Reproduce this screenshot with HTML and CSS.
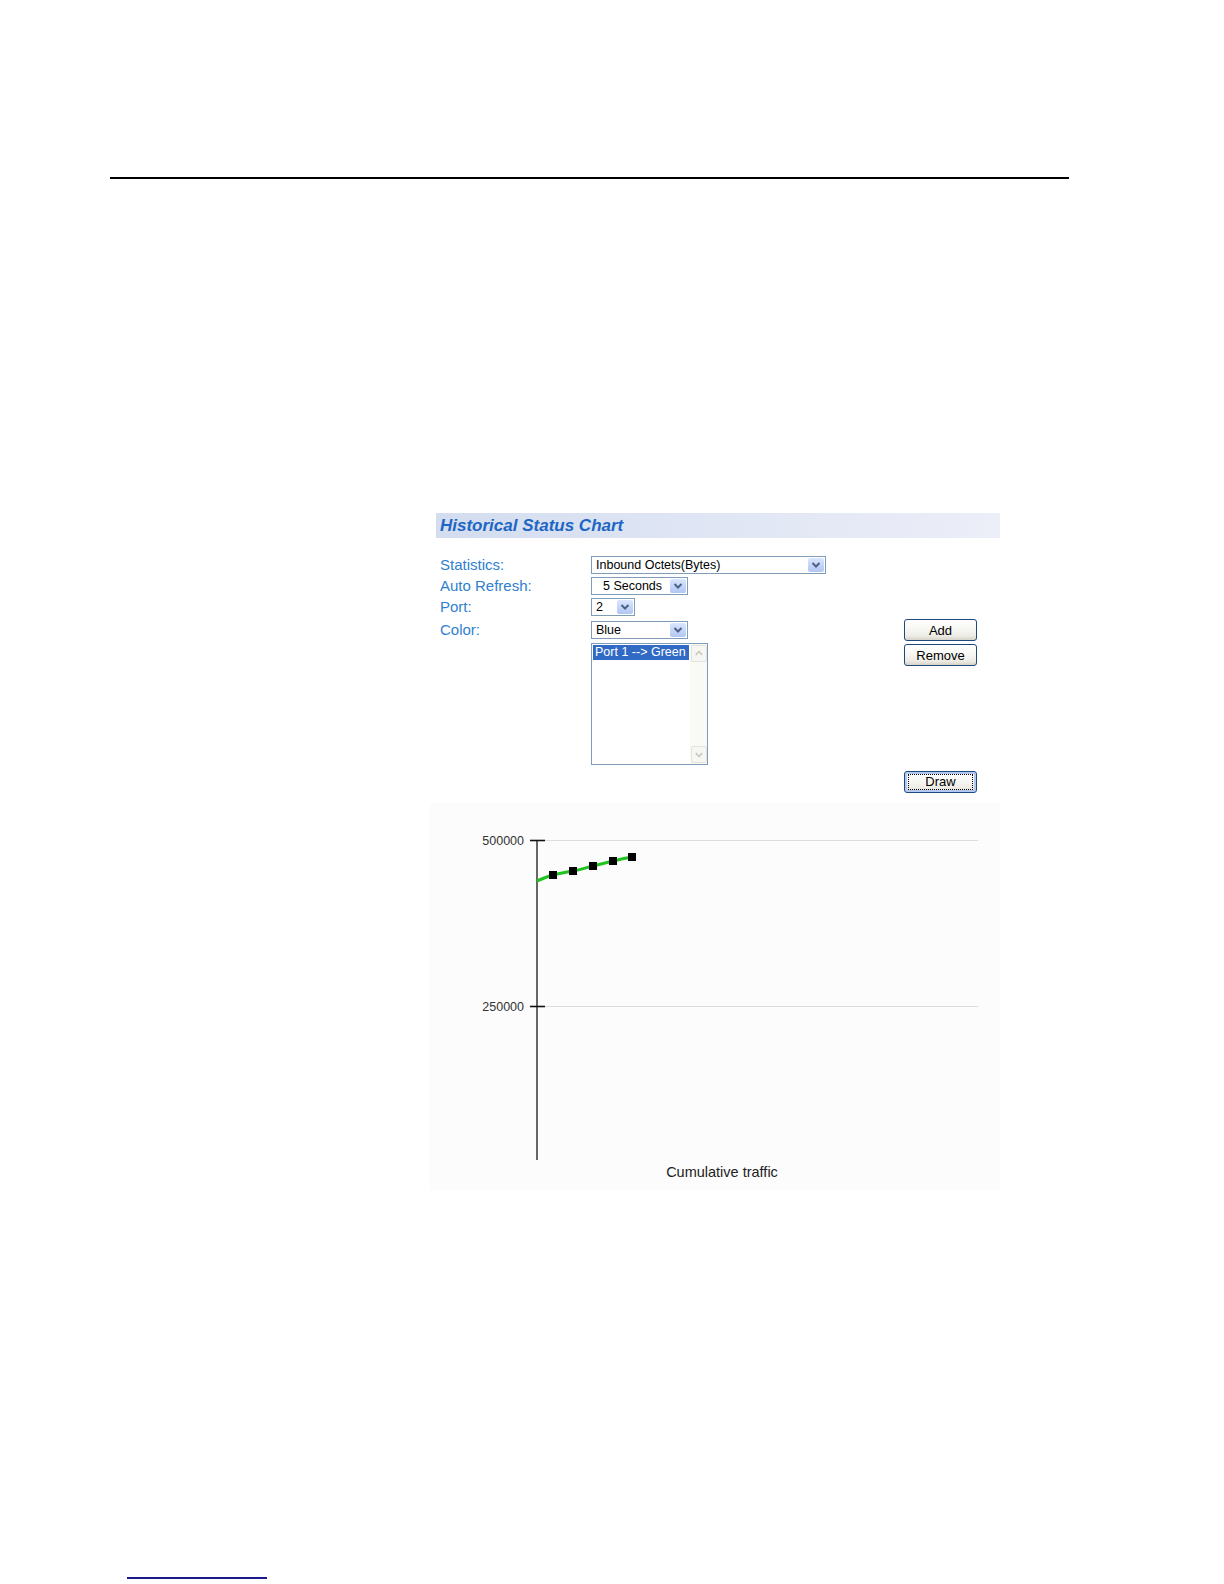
FILE: index.html
```html
<!DOCTYPE html>
<html>
<head>
<meta charset="utf-8">
<title>Historical Status Chart</title>
<link rel="stylesheet" href="styles.css">
</head>
<body>
<div class="page">
  <div class="rule"></div>
  <div class="panel">
    <div class="panel-header"><span class="title">Historical Status Chart</span></div>
    <div class="form">
      <div class="fields">
        <div class="row gap3">
          <span class="label">Statistics:</span>
          <div class="select w-stat"><span class="val">Inbound Octets(Bytes)</span><span class="arrow"><svg viewBox="0 0 16 14" width="16" height="14"><path d="M4.5 5 L8 8.5 L11.5 5" fill="none" stroke="#4d6185" stroke-width="2"/></svg></span></div>
        </div>
        <div class="row gap3">
          <span class="label">Auto Refresh:</span>
          <div class="select w-refresh"><span class="val indent">5 Seconds</span><span class="arrow"><svg viewBox="0 0 16 14" width="16" height="14"><path d="M4.5 5 L8 8.5 L11.5 5" fill="none" stroke="#4d6185" stroke-width="2"/></svg></span></div>
        </div>
        <div class="row gap5">
          <span class="label">Port:</span>
          <div class="select w-port"><span class="val">2</span><span class="arrow"><svg viewBox="0 0 16 14" width="16" height="14"><path d="M4.5 5 L8 8.5 L11.5 5" fill="none" stroke="#4d6185" stroke-width="2"/></svg></span></div>
        </div>
        <div class="row gap4">
          <span class="label">Color:</span>
          <div class="select w-color"><span class="val">Blue</span><span class="arrow"><svg viewBox="0 0 16 14" width="16" height="14"><path d="M4.5 5 L8 8.5 L11.5 5" fill="none" stroke="#4d6185" stroke-width="2"/></svg></span></div>
        </div>
        <div class="row">
          <span class="label"></span>
          <div class="listbox">
            <div class="items"><div class="item selected">Port 1 --&gt; Green</div></div>
            <div class="scrollbar">
              <span class="sb-btn"><svg viewBox="0 0 15 15" width="15" height="15"><path d="M4 9 L7.5 5.5 L11 9" fill="none" stroke="#c9c9c0" stroke-width="1.6"/></svg></span>
              <span class="sb-track"></span>
              <span class="sb-btn"><svg viewBox="0 0 15 15" width="15" height="15"><path d="M4 6 L7.5 9.5 L11 6" fill="none" stroke="#c9c9c0" stroke-width="1.6"/></svg></span>
            </div>
          </div>
        </div>
      </div>
      <div class="buttons">
        <div class="btn">Add</div>
        <div class="btn">Remove</div>
        <div class="btn btn-draw"><span class="focus">Draw</span></div>
      </div>
    </div>
    <div class="chart">
      <svg viewBox="0 0 570 387" width="570" height="387">
        <line x1="115" y1="37.5" x2="548" y2="37.5" stroke="#dcdcdc" stroke-width="1"/>
        <line x1="115" y1="203.5" x2="548" y2="203.5" stroke="#dcdcdc" stroke-width="1"/>
        <line x1="107" y1="37" x2="107" y2="357" stroke="#666" stroke-width="2"/>
        <line x1="100" y1="37.5" x2="115" y2="37.5" stroke="#111" stroke-width="1.6"/>
        <line x1="100" y1="203.5" x2="115" y2="203.5" stroke="#111" stroke-width="1.6"/>
        <text x="94" y="42" class="tick-label" text-anchor="end">500000</text>
        <text x="94" y="208" class="tick-label" text-anchor="end">250000</text>
        <path d="M107 78 C113 75.5 117 73.5 123 72 S137 69 143 68 S157 64.5 163 63 S177 59.5 183 58 S196 55 202 54" fill="none" stroke="#1fc41f" stroke-width="3"/>
        <rect x="119" y="68" width="8" height="8" fill="#000"/>
        <rect x="139" y="64" width="8" height="8" fill="#000"/>
        <rect x="159" y="59" width="8" height="8" fill="#000"/>
        <rect x="179" y="54" width="8" height="8" fill="#000"/>
        <rect x="198" y="50" width="8" height="8" fill="#000"/>
        <text x="292" y="374" class="axis-title" text-anchor="middle">Cumulative traffic</text>
      </svg>
    </div>
  </div>
  <div class="footer-link"></div>
</div>
</body>
</html>
```

FILE: styles.css
```css
html, body {
  margin: 0;
  padding: 0;
  background: #ffffff;
  font-family: "Liberation Sans", Arial, sans-serif;
  overflow: hidden;
}

.page {
  width: 1224px;
  height: 1584px;
  padding-top: 177px;
  box-sizing: border-box;
  overflow: hidden;
}

.rule {
  margin-left: 110px;
  width: 959px;
  height: 2px;
  background: #000;
}

.panel {
  margin-top: 334px;
  margin-left: 430px;
  width: 570px;
}

.panel-header {
  margin-left: 6px;
  width: 564px;
  height: 25px;
  background: linear-gradient(90deg, #d3ddef 0%, #dfe5f4 45%, #eceef8 100%);
  display: flex;
  align-items: center;
  padding-left: 4px;
  box-sizing: border-box;
}

.title {
  font-family: "Liberation Sans", Arial, sans-serif;
  font-weight: bold;
  font-style: italic;
  font-size: 17px;
  color: #1d66c4;
  line-height: 25px;
}

.form {
  display: flex;
  margin-top: 18px;
  padding-left: 10px;
}

.fields {
  width: 464px;
  display: flex;
  flex-direction: column;
}

.row {
  display: flex;
  align-items: center;
}

.gap3 { margin-bottom: 3px; }
.gap4 { margin-bottom: 4px; }
.gap5 { margin-bottom: 5px; }

.label {
  width: 151px;
  flex: none;
  font-size: 15px;
  line-height: 18px;
  color: #2f7fd0;
}

.select {
  height: 18px;
  box-sizing: border-box;
  border: 1px solid #7f9db9;
  background: #fff;
  display: flex;
  align-items: center;
  justify-content: space-between;
  font-size: 12.5px;
  color: #000;
}

.val {
  padding-left: 4px;
  white-space: pre;
  line-height: 16px;
}

.val.indent { padding-left: 11px; }

.arrow {
  width: 16px;
  height: 14px;
  margin-right: 1px;
  border-radius: 2px;
  background: linear-gradient(180deg, #dbe6fd 0%, #c3d4f8 55%, #b2c6f3 100%);
  display: flex;
}

.w-stat { width: 235px; }
.w-refresh { width: 97px; }
.w-port { width: 44px; }
.w-color { width: 97px; }

.listbox {
  width: 117px;
  height: 122px;
  box-sizing: border-box;
  border: 1px solid #7f9db9;
  background: #fff;
  display: flex;
}

.items {
  flex: 1;
  padding: 1px 0 0 1px;
  min-width: 0;
}

.item {
  font-size: 12.5px;
  line-height: 15px;
  height: 15px;
  padding-left: 2px;
  width: 96px;
  box-sizing: border-box;
  white-space: nowrap;
  overflow: hidden;
}

.item.selected {
  background: #316ac5;
  color: #fff;
}

.scrollbar {
  width: 17px;
  flex: none;
  display: flex;
  flex-direction: column;
  background: #f9f9f6;
  padding: 1px 0 1px 1px;
  box-sizing: border-box;
}

.sb-btn {
  width: 14px;
  height: 15px;
  border: 1px solid #e4e3da;
  border-radius: 2px;
  background: #f6f6f2;
  display: flex;
}

.sb-track { flex: 1; }

.buttons {
  width: 73px;
  display: flex;
  flex-direction: column;
  margin-top: 63px;
}

.btn {
  width: 73px;
  height: 22px;
  box-sizing: border-box;
  border: 1px solid #1c4a7c;
  border-radius: 3px;
  background: linear-gradient(180deg, #ffffff 0%, #f7f7f4 45%, #ecebe5 80%, #d8d3c8 100%);
  font-size: 13px;
  color: #000;
  display: flex;
  align-items: center;
  justify-content: center;
  margin-bottom: 3px;
}

.btn + .btn + .btn {
  margin-top: 102px;
  margin-bottom: 0;
}

.btn-draw {
  box-shadow: inset 0 0 0 2px #b3c9f2;
}

.focus {
  display: flex;
  align-items: center;
  justify-content: center;
  width: 63px;
  height: 14px;
  border: 1px dotted #000;
  line-height: 14px;
}

.chart {
  margin-top: 10px;
  width: 570px;
  height: 387px;
  background: #fcfcfc;
}

.chart svg { display: block; }

.tick-label {
  font-family: "Liberation Sans", Arial, sans-serif;
  font-size: 12.5px;
  fill: #333;
}

.axis-title {
  font-family: "Liberation Sans", Arial, sans-serif;
  font-size: 14.5px;
  fill: #222;
}

.footer-link {
  margin-top: 387px;
  margin-left: 127px;
  width: 140px;
  height: 2px;
  background: #1a1a8e;
}
```
